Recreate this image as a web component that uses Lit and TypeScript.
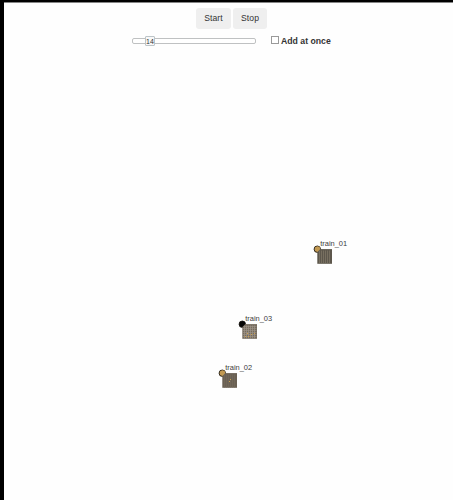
import { LitElement, html, css, svg } from "lit";
import { customElement, property, state } from "lit/decorators.js";

interface Train {
  name: string;
  x: number;
  y: number;
  dot: string;
  body: string;
  stripe: string;
  specks: [number, number][];
  grid: boolean;
}

const TRAINS: Train[] = [
  { name: "train_01", x: 317, y: 249, dot: "#c39a52", body: "#5d574c", stripe: "#837a69", specks: [], grid: false },
  { name: "train_03", x: 242, y: 324, dot: "#050505", body: "#756b5e", stripe: "#a0968a", specks: [[3, 12], [6, 12], [9, 10], [12, 9], [5, 9]], grid: true },
  { name: "train_02", x: 222, y: 373, dot: "#c39a52", body: "#6a6053", stripe: "#746a5c", specks: [[8, 6], [7, 8]], grid: false },
];

@customElement("train-marker")
class TrainMarker extends LitElement {
  static styles = css`
    :host { display: block; }
    svg { display: block; overflow: visible; }
    text { font: 7.4px "Liberation Sans", Arial, sans-serif; fill: #3c3c3c; }
  `;
  @property({ attribute: false }) train!: Train;

  render() {
    const t = this.train;
    const lines = [2.5, 4.5, 6.5, 8.5, 10.5, 12.5];
    return html`<svg width="36" height="24" viewBox="-4 -10 36 24">
      <circle cx="0.3" cy="0.2" r="3.2" fill=${t.dot} stroke="#1c1813" stroke-width="0.9"></circle>
      <rect x="0.3" y="0.1" width="14.7" height="14.7" fill=${t.body}></rect>
      ${lines.map((p) => svg`<path d="M${p} 1.5V14.5" stroke=${t.stripe} stroke-width="0.7"></path>`)}
      ${t.grid ? lines.map((p) => svg`<path d="M1 ${p}H14.5" stroke=${t.stripe} stroke-width="0.6"></path>`) : null}
      ${t.specks.map(([x, y]) => svg`<rect x=${x} y=${y} width="1" height="1" fill="#d0a24b"></rect>`)}
      <path d="M-2.2 -0.7A3.1 3.1 0 0 1 3.2 -1L2.8 0.4L0.5 3Z" fill=${t.dot}></path>
      <text x="3.2" y="-2.8" textLength="27" lengthAdjust="spacingAndGlyphs">${t.name}</text>
    </svg>`;
  }
}

@customElement("app-root")
class AppRoot extends LitElement {
  static styles = css`
    :host {
      display: flex;
      flex-direction: column;
      box-sizing: border-box;
      height: 100vh;
      border-top: 2px solid #000;
      border-left: 4px solid #000;
      background: #fefefe;
      color: #333;
      font-family: "Liberation Sans", Arial, sans-serif;
      overflow: hidden;
    }
    .edge { height: 1px; background: #858585; flex: none; }
    .buttons { display: flex; gap: 2px; padding: 5px 0 0 192px; }
    button {
      height: 21px;
      width: 35px;
      padding: 0 0 2px;
      border: 0;
      border-radius: 3px;
      background: #efefef;
      color: #333;
      font: 8.6px "Liberation Sans", Arial, sans-serif;
      letter-spacing: 0.1px;
    }
    .stop { width: 34px; }
    .settings { display: flex; align-items: center; height: 10px; padding: 7px 0 0 128px; }
    .track {
      display: flex;
      align-items: center;
      box-sizing: border-box;
      width: 124px;
      height: 6px;
      border: 1px solid #bfc1c2;
      border-radius: 2px;
      background: #fff;
    }
    .handle {
      box-sizing: border-box;
      flex: none;
      width: 10px;
      height: 10px;
      margin-left: 12px;
      border: 1px solid #bcc4c8;
      border-radius: 1px;
      background: #f8f8f8;
      font-size: 7px;
      line-height: 9px;
      display: flex;
      justify-content: center;
    }
    label {
      display: flex;
      align-items: center;
      margin-left: 15px;
      font-size: 8.7px;
      font-weight: bold;
      line-height: 10px;
    }
    input {
      appearance: none;
      box-sizing: border-box;
      width: 8px;
      height: 8px;
      margin: 0 2px 2px 0;
      border: 1px solid #9a9a9a;
      background: #fff;
    }
    .map { position: relative; flex: 1; }
    train-marker { position: absolute; }
  `;
  @state() private amount = 14;

  render() {
    return html`
      <div class="edge"></div>
      <div class="buttons"><button>Start</button><button class="stop">Stop</button></div>
      <div class="settings">
        <div class="track"><span class="handle">${this.amount}</span></div>
        <label><input type="checkbox" /><span>Add at once</span></label>
      </div>
      <div class="map">
        ${TRAINS.map((t) => html`<train-marker .train=${t} style="left:${t.x - 8}px;top:${t.y - 56}px"></train-marker>`)}
      </div>
    `;
  }
}
